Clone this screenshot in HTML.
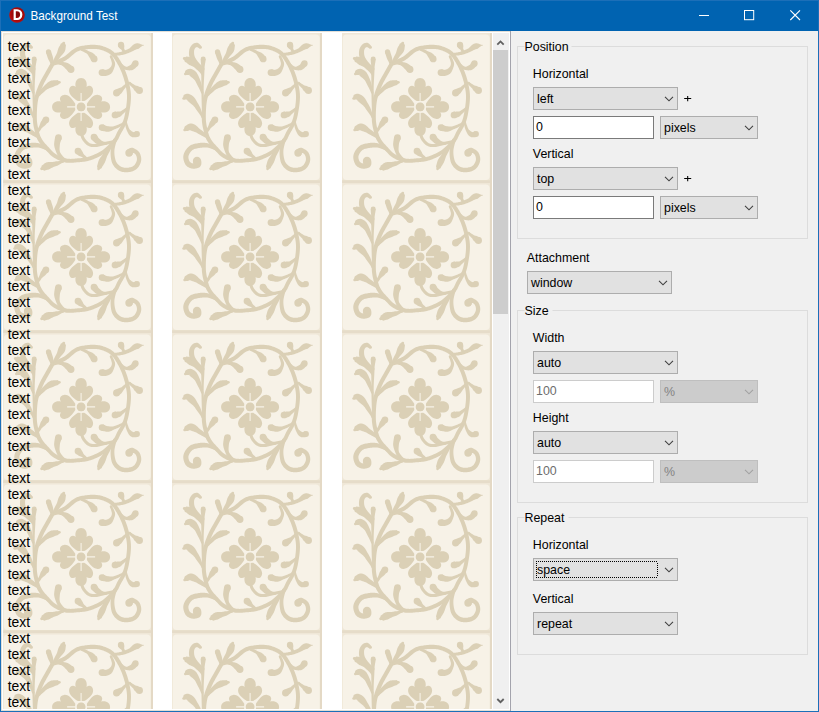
<!DOCTYPE html>
<html><head><meta charset="utf-8">
<style>
html,body{margin:0;padding:0}
body{width:819px;height:712px;overflow:hidden;background:#0063B1;position:relative;font-family:"Liberation Sans",sans-serif;}
svg{position:absolute;left:0;top:0}
</style></head><body>
<svg width="819" height="712" viewBox="0 0 819 712" font-family="Liberation Sans, sans-serif">
<!-- title bar -->
<rect x="0" y="0" width="819" height="712" fill="#1C6FB8"/>
<rect x="1" y="1" width="817" height="30" fill="#0063B1"/>
<defs><radialGradient id="ig" cx="0.55" cy="0.45" r="0.6"><stop offset="0" stop-color="#7A0808"/><stop offset="0.7" stop-color="#A80A0A"/><stop offset="1" stop-color="#C81212"/></radialGradient></defs>
<circle cx="17" cy="15" r="7.8" fill="url(#ig)"/>
<path fill="#fff" fill-rule="evenodd" d="M13.6 9.2H17.2A5.2 5.4 0 0 1 17.2 20H13.6Z M15.8 11.2H17A3.1 3.4 0 0 1 17 18H15.8Z"/>
<text x="30.4" y="19.8" fill="#fff" font-size="12.6" textLength="87" lengthAdjust="spacingAndGlyphs">Background Test</text>
<line x1="699" y1="15.5" x2="709" y2="15.5" stroke="#fff" stroke-width="1"/>
<rect x="744.5" y="10.5" width="9.2" height="9.2" fill="none" stroke="#fff" stroke-width="1"/>
<path d="M790.3 10.3 L800 20 M800 10.3 L790.3 20" stroke="#fff" stroke-width="1.1"/>
<!-- web view -->
<rect x="1" y="31" width="510" height="680" fill="#E2DED6"/>
<rect x="2" y="32" width="508" height="678" fill="#fff"/>
<rect x="510" y="31" width="1" height="680" fill="#A3A3AC"/>
<svg x="3" y="33" width="490" height="676" viewBox="3 33 490 676" overflow="hidden">
<defs><filter id="bl" x="-5%" y="-5%" width="110%" height="110%"><feGaussianBlur stdDeviation="0.35"/></filter><g id="tile" filter="url(#bl)"><rect x="0" y="0" width="150" height="150" fill="#EFE7D7"/><rect x="0" y="147.2" width="150" height="2.8" fill="#E6DCC9"/><rect x="148" y="0" width="2" height="150" fill="#E4D9C5"/><rect x="0.8" y="1.6" width="146.9" height="145.4" rx="4" fill="#F7F2E7"/><g fill="#DBD0B6"><path d="M50.31 32.90 L51.04 32.59 L52.00 32.20 L53.15 31.74 L54.45 31.21 L55.86 30.63 L57.33 30.00 L58.83 29.34 L60.30 28.64 L61.73 27.92 L63.06 27.17 L64.34 26.34 L65.56 25.44 L66.73 24.50 L67.85 23.53 L68.95 22.58 L70.01 21.66 L71.04 20.80 L72.03 20.03 L73.00 19.37 L73.95 18.82 L74.92 18.36 L75.92 17.96 L76.92 17.62 L77.93 17.33 L78.95 17.08 L79.98 16.87 L81.03 16.68 L82.09 16.52 L83.17 16.37 L84.25 16.23 L85.31 16.11 L86.38 16.02 L87.46 15.95 L88.55 15.91 L89.62 15.89 L90.69 15.91 L91.74 15.95 L92.77 16.01 L93.76 16.10 L94.71 16.22 L95.63 16.37 L96.54 16.55 L97.43 16.76 L98.30 16.99 L99.16 17.26 L100.00 17.54 L100.82 17.84 L101.62 18.16 L102.39 18.49 L103.13 18.84 L103.84 19.18 L104.49 19.52 L105.11 19.87 L105.70 20.22 L106.26 20.59 L106.80 20.98 L107.33 21.40 L107.86 21.86 L108.40 22.35 L108.94 22.90 L109.48 23.49 L110.02 24.12 L110.56 24.79 L111.09 25.51 L111.62 26.27 L112.15 27.06 L112.68 27.88 L113.21 28.73 L113.73 29.60 L114.25 30.50 L114.77 31.42 L115.29 32.37 L115.81 33.34 L116.32 34.35 L116.82 35.37 L117.32 36.41 L117.80 37.47 L118.26 38.54 L118.71 39.62 L119.13 40.71 L119.54 41.81 L119.94 42.95 L120.33 44.11 L120.70 45.28 L121.06 46.47 L121.40 47.66 L121.72 48.85 L122.02 50.05 L122.30 51.23 L122.56 52.41 L122.80 53.58 L123.03 54.74 L123.24 55.88 L123.43 57.01 L123.60 58.15 L123.75 59.28 L123.86 60.43 L123.95 61.59 L124.01 62.78 L124.03 64.00 L124.01 65.27 L123.95 66.60 L123.85 67.98 L123.72 69.39 L123.57 70.82 L123.39 72.24 L123.20 73.66 L122.99 75.04 L122.78 76.39 L122.57 77.67 L122.35 78.90 L122.14 80.08 L121.93 81.23 L121.70 82.33 L121.46 83.41 L121.20 84.46 L120.91 85.50 L120.60 86.53 L120.26 87.56 L119.88 88.59 L119.45 89.62 L118.97 90.67 L118.43 91.74 L117.85 92.82 L117.25 93.89 L116.64 94.97 L116.02 96.03 L115.41 97.07 L114.83 98.09 L114.28 99.08 L113.79 100.03 L113.37 100.91 L113.00 101.72 L112.67 102.47 L112.35 103.18 L112.01 103.85 L111.65 104.53 L111.22 105.22 L110.71 105.96 L110.08 106.79 L109.31 107.72 L108.46 108.73 L107.53 109.79 L106.54 110.87 L105.50 111.97 L104.42 113.05 L103.31 114.11 L102.17 115.11 L101.03 116.05 L99.88 116.91 L98.68 117.71 L97.40 118.49 L96.06 119.25 L94.67 119.98 L93.25 120.67 L91.83 121.32 L90.41 121.93 L89.02 122.49 L87.67 123.00 L86.38 123.45 L85.17 123.83 L84.00 124.14 L82.86 124.39 L81.73 124.60 L80.60 124.77 L79.48 124.91 L78.34 125.03 L77.19 125.14 L76.02 125.24 L74.82 125.35 L73.61 125.46 L72.40 125.58 L71.20 125.68 L70.02 125.77 L68.85 125.84 L67.70 125.88 L66.57 125.87 L65.47 125.82 L64.40 125.72 L63.36 125.56 L62.31 125.33 L61.23 125.04 L60.14 124.69 L59.05 124.29 L57.96 123.85 L56.89 123.37 L55.86 122.87 L54.86 122.36 L53.92 121.83 L53.04 121.31 L52.26 120.81 L51.57 120.30 L50.92 119.78 L50.31 119.23 L49.72 118.65 L49.12 118.04 L48.51 117.38 L47.87 116.68 L47.19 115.93 L46.46 115.14 L45.67 114.30 L44.84 113.43 L43.99 112.52 L43.13 111.59 L42.28 110.64 L41.45 109.69 L40.67 108.73 L39.94 107.79 L39.29 106.87 L38.73 105.97 L38.24 105.09 L37.81 104.22 L37.42 103.34 L37.08 102.44 L36.77 101.54 L36.49 100.60 L36.22 99.64 L35.97 98.65 L35.72 97.61 L35.47 96.54 L35.21 95.45 L34.97 94.39 L34.75 93.33 L34.54 92.27 L34.36 91.18 L34.19 90.06 L34.06 88.90 L33.95 87.67 L33.87 86.36 L33.83 84.96 L33.82 83.43 L33.83 81.76 L33.86 80.00 L33.93 78.17 L34.02 76.30 L34.14 74.43 L34.30 72.56 L34.50 70.75 L34.74 69.01 L35.01 67.38 L35.34 65.82 L35.71 64.29 L36.13 62.79 L36.58 61.32 L37.08 59.87 L37.60 58.43 L38.15 57.01 L38.72 55.60 L39.30 54.20 L39.89 52.82 L40.50 51.47 L41.15 50.11 L41.85 48.76 L42.58 47.41 L43.33 46.08 L44.07 44.77 L44.81 43.50 L45.52 42.28 L46.19 41.10 L46.81 40.00 L47.38 38.96 L47.94 37.96 L48.48 36.99 L48.99 36.07 L49.48 35.21 L49.94 34.40 L50.35 33.68 L50.72 33.03 L51.04 32.47 L51.30 32.02 L47.70 29.98 L47.45 30.43 L47.13 30.99 L46.77 31.63 L46.35 32.36 L45.89 33.17 L45.40 34.04 L44.87 34.97 L44.33 35.95 L43.76 36.96 L43.19 38.00 L42.60 39.07 L41.94 40.22 L41.23 41.44 L40.50 42.72 L39.74 44.05 L38.97 45.42 L38.21 46.83 L37.47 48.27 L36.76 49.72 L36.11 51.18 L35.50 52.61 L34.91 54.04 L34.32 55.50 L33.75 56.99 L33.20 58.51 L32.68 60.06 L32.19 61.64 L31.74 63.26 L31.34 64.92 L30.99 66.62 L30.69 68.40 L30.44 70.26 L30.23 72.17 L30.07 74.12 L29.94 76.07 L29.85 78.00 L29.79 79.89 L29.76 81.71 L29.75 83.43 L29.77 85.04 L29.82 86.54 L29.90 87.97 L30.02 89.31 L30.18 90.59 L30.36 91.82 L30.56 93.00 L30.78 94.14 L31.02 95.26 L31.27 96.36 L31.53 97.46 L31.79 98.55 L32.06 99.62 L32.33 100.68 L32.62 101.73 L32.94 102.78 L33.30 103.82 L33.70 104.86 L34.16 105.91 L34.68 106.96 L35.27 108.03 L35.96 109.10 L36.72 110.17 L37.53 111.23 L38.39 112.27 L39.28 113.29 L40.18 114.29 L41.07 115.25 L41.94 116.17 L42.77 117.04 L43.54 117.86 L44.25 118.63 L44.93 119.37 L45.58 120.08 L46.24 120.78 L46.91 121.47 L47.61 122.15 L48.35 122.81 L49.15 123.45 L50.02 124.08 L50.96 124.69 L51.95 125.27 L52.99 125.85 L54.09 126.42 L55.23 126.97 L56.41 127.49 L57.63 127.98 L58.86 128.43 L60.11 128.83 L61.37 129.17 L62.64 129.44 L63.92 129.63 L65.20 129.75 L66.48 129.81 L67.76 129.81 L69.03 129.77 L70.29 129.70 L71.53 129.60 L72.77 129.49 L73.98 129.37 L75.18 129.25 L76.36 129.15 L77.54 129.04 L78.73 128.93 L79.93 128.81 L81.15 128.65 L82.38 128.46 L83.65 128.23 L84.94 127.93 L86.27 127.58 L87.62 127.15 L89.00 126.67 L90.44 126.13 L91.91 125.53 L93.41 124.89 L94.92 124.19 L96.43 123.46 L97.92 122.68 L99.37 121.85 L100.78 120.99 L102.12 120.09 L103.42 119.12 L104.70 118.08 L105.94 116.98 L107.14 115.84 L108.30 114.68 L109.40 113.52 L110.44 112.38 L111.41 111.27 L112.30 110.21 L113.12 109.21 L113.86 108.26 L114.49 107.35 L115.02 106.48 L115.47 105.65 L115.87 104.85 L116.22 104.08 L116.56 103.32 L116.90 102.56 L117.28 101.77 L117.72 100.92 L118.23 100.00 L118.79 99.02 L119.39 97.99 L120.01 96.92 L120.65 95.82 L121.28 94.69 L121.89 93.54 L122.48 92.37 L123.03 91.19 L123.52 90.01 L123.95 88.86 L124.33 87.72 L124.67 86.58 L124.98 85.45 L125.27 84.31 L125.53 83.16 L125.77 81.99 L126.00 80.80 L126.22 79.58 L126.43 78.33 L126.65 77.01 L126.87 75.64 L127.08 74.21 L127.29 72.75 L127.47 71.27 L127.64 69.78 L127.77 68.30 L127.88 66.83 L127.95 65.39 L127.97 64.00 L127.95 62.66 L127.90 61.35 L127.80 60.08 L127.68 58.83 L127.52 57.60 L127.34 56.39 L127.14 55.19 L126.92 54.00 L126.69 52.80 L126.44 51.59 L126.18 50.36 L125.88 49.11 L125.57 47.85 L125.23 46.60 L124.88 45.35 L124.51 44.10 L124.12 42.87 L123.72 41.66 L123.30 40.46 L122.87 39.29 L122.42 38.14 L121.95 36.99 L121.46 35.85 L120.96 34.73 L120.44 33.63 L119.91 32.55 L119.37 31.50 L118.83 30.47 L118.29 29.47 L117.75 28.50 L117.20 27.56 L116.65 26.64 L116.10 25.73 L115.53 24.85 L114.95 23.98 L114.36 23.14 L113.76 22.33 L113.14 21.55 L112.51 20.81 L111.86 20.10 L111.21 19.45 L110.56 18.84 L109.91 18.28 L109.24 17.75 L108.57 17.26 L107.87 16.80 L107.16 16.36 L106.42 15.95 L105.66 15.55 L104.87 15.16 L104.04 14.78 L103.18 14.41 L102.29 14.05 L101.36 13.71 L100.41 13.38 L99.44 13.08 L98.43 12.81 L97.40 12.56 L96.35 12.35 L95.29 12.18 L94.20 12.04 L93.09 11.94 L91.95 11.87 L90.80 11.82 L89.62 11.81 L88.45 11.82 L87.26 11.86 L86.08 11.93 L84.90 12.04 L83.75 12.17 L82.63 12.31 L81.51 12.46 L80.37 12.63 L79.22 12.83 L78.05 13.07 L76.87 13.36 L75.68 13.70 L74.48 14.11 L73.28 14.60 L72.05 15.18 L70.81 15.88 L69.61 16.70 L68.46 17.59 L67.34 18.52 L66.24 19.47 L65.16 20.41 L64.09 21.32 L63.03 22.18 L61.99 22.95 L60.94 23.63 L59.78 24.28 L58.49 24.93 L57.11 25.59 L55.68 26.22 L54.27 26.82 L52.89 27.39 L51.61 27.90 L50.45 28.37 L49.46 28.77 L48.69 29.10Z"/><path d="M110.57 22.97 L111.00 22.92 L111.55 22.87 L112.22 22.82 L112.99 22.76 L113.82 22.70 L114.71 22.62 L115.62 22.53 L116.56 22.42 L117.49 22.29 L118.39 22.12 L119.27 21.93 L120.18 21.71 L121.10 21.47 L122.04 21.21 L122.98 20.92 L123.91 20.61 L124.83 20.28 L125.72 19.94 L126.58 19.58 L127.43 19.22 L128.28 18.84 L129.10 18.45 L129.88 18.05 L130.61 17.68 L131.30 17.32 L131.94 17.01 L132.54 16.74 L133.08 16.52 L133.57 16.35 L134.04 16.22 L134.57 16.08 L135.21 15.90 L135.90 15.53 L136.63 14.99 L137.38 14.35 L138.13 13.72 L138.85 13.21 L139.52 12.85 L140.10 12.65 L140.55 12.55 L140.45 11.85 L140.00 11.88 L139.40 11.82 L138.68 11.61 L137.84 11.27 L136.92 10.85 L135.93 10.46 L134.91 10.21 L133.89 10.19 L132.91 10.43 L131.96 10.78 L131.08 11.24 L130.29 11.77 L129.60 12.33 L128.99 12.90 L128.44 13.46 L127.92 14.01 L127.42 14.52 L126.91 15.00 L126.37 15.41 L125.77 15.78 L125.07 16.12 L124.29 16.45 L123.47 16.79 L122.63 17.12 L121.77 17.45 L120.91 17.78 L120.05 18.08 L119.21 18.37 L118.39 18.64 L117.61 18.88 L116.84 19.08 L116.03 19.27 L115.19 19.43 L114.34 19.56 L113.50 19.68 L112.70 19.78 L111.96 19.86 L111.28 19.92 L110.70 19.98 L110.23 20.03Z"/><circle cx="110.40" cy="21.50" r="1.47"/><circle cx="140.50" cy="12.20" r="0.35"/><path d="M122.49 19.00 L122.37 18.76 L122.23 18.43 L122.09 18.04 L121.95 17.59 L121.80 17.11 L121.63 16.62 L121.44 16.13 L121.24 15.67 L121.16 15.19 L121.18 14.72 L121.25 14.24 L121.32 13.75 L121.35 13.27 L121.30 12.83 L121.16 12.44 L121.09 12.03 L121.07 11.64 L121.04 11.29 L120.98 11.00 L120.90 10.78 L115.10 13.22 L115.20 13.42 L115.36 13.65 L115.58 13.91 L115.85 14.22 L116.09 14.56 L116.29 14.96 L116.58 15.33 L116.96 15.67 L117.40 15.98 L117.82 16.28 L118.22 16.60 L118.56 16.99 L118.81 17.44 L119.09 17.90 L119.39 18.33 L119.69 18.74 L119.97 19.12 L120.21 19.46 L120.39 19.76 L120.51 20.00Z"/><circle cx="121.50" cy="19.50" r="1.11"/><circle cx="118.00" cy="12.00" r="3.15"/><path d="M115.19 30.31 L115.52 30.65 L115.95 31.13 L116.45 31.74 L117.03 32.45 L117.65 33.20 L118.31 33.97 L119.01 34.71 L119.76 35.39 L120.56 35.97 L121.41 36.41 L122.25 36.71 L123.08 36.94 L123.92 37.12 L124.76 37.25 L125.61 37.34 L126.45 37.38 L127.28 37.36 L128.08 37.29 L128.84 37.15 L129.62 36.92 L130.46 36.53 L131.23 36.00 L131.91 35.43 L132.54 34.88 L133.12 34.35 L133.64 33.86 L134.09 33.41 L134.45 33.03 L134.68 32.78 L134.85 32.60 L130.15 28.40 L129.87 28.73 L129.55 29.17 L129.26 29.63 L128.98 30.10 L128.70 30.58 L128.41 31.04 L128.11 31.43 L127.81 31.72 L127.58 31.92 L127.38 32.08 L127.06 32.29 L126.63 32.55 L126.16 32.83 L125.66 33.10 L125.14 33.35 L124.61 33.55 L124.07 33.68 L123.54 33.74 L123.03 33.71 L122.59 33.59 L122.14 33.36 L121.58 33.00 L120.93 32.53 L120.24 31.97 L119.54 31.36 L118.86 30.74 L118.23 30.13 L117.67 29.55 L117.19 29.06 L116.81 28.69Z"/><circle cx="116.00" cy="29.50" r="1.15"/><circle cx="132.50" cy="30.50" r="3.15"/><path d="M106.84 23.95 L107.03 24.42 L107.28 25.04 L107.57 25.75 L107.88 26.53 L108.17 27.36 L108.44 28.20 L108.66 29.03 L108.81 29.79 L108.89 30.45 L108.88 30.96 L108.81 31.46 L108.68 32.01 L108.49 32.61 L108.21 33.20 L107.84 33.77 L107.42 34.30 L106.96 34.79 L106.49 35.22 L106.04 35.60 L105.64 35.87 L105.33 36.04 L105.05 36.15 L104.76 36.24 L104.46 36.34 L104.15 36.43 L103.81 36.53 L103.46 36.64 L103.09 36.75 L102.69 36.83 L102.36 36.88 L102.17 36.87 L101.98 36.83 L101.73 36.77 L101.43 36.69 L101.10 36.60 L100.76 36.51 L100.41 36.43 L100.05 36.35 L99.65 36.29 L99.33 36.25 L98.67 42.95 L98.82 42.96 L99.02 42.98 L99.37 43.02 L99.82 43.06 L100.33 43.08 L100.92 43.09 L101.55 43.07 L102.23 43.00 L102.95 42.89 L103.64 42.72 L104.18 42.55 L104.70 42.39 L105.26 42.21 L105.86 41.99 L106.48 41.71 L107.11 41.35 L107.73 40.91 L108.32 40.39 L108.88 39.79 L109.36 39.13 L109.73 38.45 L110.08 37.75 L110.41 36.99 L110.72 36.20 L111.03 35.38 L111.33 34.55 L111.62 33.71 L111.87 32.85 L112.05 31.96 L112.12 31.04 L112.04 30.07 L111.81 29.10 L111.50 28.15 L111.11 27.22 L110.70 26.33 L110.29 25.49 L109.90 24.71 L109.57 24.03 L109.32 23.48 L109.16 23.05Z"/><circle cx="108.00" cy="23.50" r="1.24"/><circle cx="99.00" cy="39.60" r="3.37"/><path d="M78.04 17.56 L78.38 17.71 L78.82 17.90 L79.32 18.14 L79.88 18.41 L80.46 18.72 L81.06 19.05 L81.65 19.38 L82.22 19.72 L82.75 20.03 L83.22 20.32 L83.67 20.60 L84.10 20.95 L84.49 21.35 L84.85 21.80 L85.16 22.29 L85.45 22.78 L85.72 23.27 L85.99 23.74 L86.25 24.17 L86.49 24.53 L86.71 24.84 L86.96 25.15 L87.20 25.50 L87.41 25.89 L87.59 26.29 L87.76 26.69 L87.93 27.07 L88.11 27.42 L88.31 27.74 L88.49 27.99 L93.91 24.01 L93.79 23.85 L93.61 23.63 L93.36 23.35 L93.04 23.01 L92.68 22.65 L92.27 22.25 L91.86 21.82 L91.43 21.36 L91.00 20.89 L90.51 20.47 L90.01 20.13 L89.48 19.83 L88.90 19.57 L88.30 19.32 L87.69 19.09 L87.07 18.85 L86.47 18.60 L85.88 18.33 L85.33 18.02 L84.78 17.68 L84.18 17.37 L83.53 17.08 L82.85 16.81 L82.16 16.57 L81.48 16.34 L80.83 16.13 L80.23 15.93 L79.71 15.75 L79.28 15.58 L78.96 15.44Z"/><circle cx="78.50" cy="16.50" r="1.15"/><circle cx="91.20" cy="26.00" r="3.37"/><path d="M123.12 50.13 L122.78 50.47 L122.32 50.90 L121.77 51.38 L121.14 51.91 L120.47 52.47 L119.78 53.05 L119.13 53.65 L118.48 54.21 L117.77 54.60 L117.09 54.85 L116.43 55.03 L115.76 55.20 L115.11 55.43 L114.52 55.72 L113.97 56.05 L113.39 56.30 L112.83 56.50 L112.33 56.70 L111.89 56.91 L111.56 57.12 L115.44 62.88 L115.70 62.69 L116.02 62.41 L116.40 62.04 L116.84 61.59 L117.34 61.13 L117.93 60.70 L118.50 60.19 L119.02 59.56 L119.48 58.87 L119.91 58.15 L120.34 57.41 L120.84 56.67 L121.45 56.00 L122.07 55.31 L122.66 54.60 L123.20 53.89 L123.71 53.23 L124.17 52.66 L124.57 52.20 L124.88 51.87Z"/><circle cx="124.00" cy="51.00" r="1.24"/><circle cx="113.50" cy="60.00" r="3.47"/><path d="M125.71 50.95 L126.03 51.23 L126.44 51.62 L126.92 52.09 L127.43 52.65 L127.99 53.24 L128.58 53.84 L129.21 54.40 L129.80 54.97 L130.28 55.62 L130.67 56.27 L131.06 56.90 L131.47 57.51 L131.92 58.04 L132.43 58.47 L132.94 58.85 L133.37 59.26 L133.74 59.65 L134.08 59.99 L134.36 60.24 L134.60 60.41 L138.40 54.59 L138.11 54.42 L137.73 54.24 L137.28 54.08 L136.78 53.92 L136.25 53.72 L135.75 53.43 L135.21 53.17 L134.61 52.98 L133.97 52.85 L133.33 52.73 L132.65 52.56 L131.95 52.28 L131.29 51.84 L130.64 51.35 L129.95 50.88 L129.27 50.45 L128.64 50.04 L128.08 49.66 L127.63 49.32 L127.29 49.05Z"/><circle cx="126.50" cy="50.00" r="1.24"/><circle cx="136.50" cy="57.50" r="3.47"/><path d="M123.23 74.53 L122.82 74.85 L122.28 75.25 L121.63 75.71 L120.89 76.19 L120.11 76.70 L119.33 77.23 L118.59 77.78 L117.82 78.20 L117.06 78.42 L116.41 78.49 L115.87 78.47 L115.33 78.46 L114.79 78.49 L114.27 78.58 L113.74 78.65 L113.20 78.64 L112.67 78.61 L112.16 78.60 L111.66 78.64 L111.25 78.72 L112.75 85.28 L112.99 85.21 L113.30 85.11 L113.76 84.94 L114.32 84.71 L114.95 84.48 L115.66 84.27 L116.41 84.02 L117.17 83.64 L117.90 83.12 L118.59 82.51 L119.22 81.82 L119.86 81.09 L120.58 80.42 L121.35 79.79 L122.07 79.11 L122.75 78.42 L123.36 77.78 L123.92 77.22 L124.40 76.78 L124.77 76.47Z"/><circle cx="124.00" cy="75.50" r="1.24"/><circle cx="112.00" cy="82.00" r="3.37"/><path d="M120.00 89.47 L119.48 89.71 L118.79 90.04 L117.99 90.41 L117.08 90.81 L116.10 91.22 L115.10 91.63 L114.09 92.03 L113.13 92.42 L112.25 92.77 L111.47 93.06 L110.73 93.26 L109.99 93.41 L109.26 93.49 L108.55 93.52 L107.88 93.52 L107.23 93.48 L106.63 93.43 L106.05 93.36 L105.51 93.29 L105.04 93.23 L104.60 93.16 L104.12 93.08 L103.58 92.93 L103.02 92.72 L102.45 92.46 L101.90 92.19 L101.36 91.93 L100.84 91.70 L100.33 91.50 L99.91 91.37 L98.09 97.63 L98.38 97.70 L98.76 97.81 L99.30 97.94 L99.94 98.09 L100.67 98.23 L101.46 98.37 L102.29 98.51 L103.16 98.66 L104.06 98.77 L104.96 98.77 L105.79 98.67 L106.57 98.50 L107.33 98.27 L108.08 97.99 L108.81 97.67 L109.53 97.32 L110.26 96.97 L110.99 96.61 L111.74 96.27 L112.53 95.94 L113.40 95.60 L114.35 95.17 L115.32 94.68 L116.30 94.14 L117.27 93.59 L118.20 93.05 L119.07 92.56 L119.85 92.13 L120.50 91.78 L121.00 91.53Z"/><circle cx="120.50" cy="90.50" r="1.15"/><circle cx="99.00" cy="94.50" r="3.26"/><path d="M121.47 88.27 L121.61 88.78 L121.76 89.46 L121.92 90.29 L122.09 91.23 L122.27 92.25 L122.48 93.29 L122.72 94.34 L123.01 95.35 L123.35 96.30 L123.71 97.15 L124.06 97.94 L124.40 98.72 L124.76 99.49 L125.14 100.25 L125.55 100.99 L126.01 101.68 L126.51 102.31 L127.07 102.88 L127.69 103.37 L128.43 103.81 L129.35 104.15 L130.30 104.32 L131.17 104.36 L131.97 104.33 L132.68 104.25 L133.31 104.15 L133.85 104.03 L134.25 103.94 L134.46 103.89 L134.58 103.87 L133.42 98.13 L133.01 98.22 L132.53 98.37 L132.12 98.54 L131.73 98.71 L131.38 98.88 L131.07 99.02 L130.81 99.11 L130.64 99.17 L130.59 99.19 L130.57 99.19 L130.40 99.11 L130.06 98.94 L129.66 98.72 L129.20 98.45 L128.70 98.14 L128.18 97.78 L127.65 97.37 L127.14 96.91 L126.68 96.40 L126.29 95.85 L125.97 95.21 L125.66 94.43 L125.33 93.54 L125.00 92.59 L124.67 91.63 L124.36 90.68 L124.09 89.78 L123.86 88.96 L123.67 88.26 L123.53 87.73Z"/><circle cx="122.50" cy="88.00" r="1.06"/><circle cx="134.00" cy="101.00" r="2.93"/><path d="M110.28 106.56 L110.12 107.19 L109.89 108.01 L109.60 109.00 L109.27 110.13 L108.93 111.35 L108.58 112.64 L108.26 113.97 L107.98 115.31 L107.76 116.63 L107.63 117.89 L107.58 119.10 L107.57 120.32 L107.60 121.56 L107.67 122.81 L107.78 124.05 L107.94 125.27 L108.15 126.47 L108.40 127.62 L108.70 128.73 L109.06 129.78 L109.49 130.78 L109.99 131.72 L110.54 132.60 L111.14 133.42 L111.78 134.19 L112.45 134.90 L113.15 135.55 L113.87 136.15 L114.60 136.70 L115.35 137.19 L116.15 137.65 L116.99 138.05 L117.85 138.39 L118.73 138.67 L119.62 138.89 L120.52 139.06 L121.42 139.17 L122.33 139.24 L123.22 139.26 L124.11 139.24 L125.02 139.17 L125.95 139.06 L126.90 138.90 L127.87 138.69 L128.84 138.43 L129.80 138.13 L130.74 137.76 L131.66 137.33 L132.54 136.82 L133.37 136.23 L134.12 135.56 L134.81 134.82 L135.43 134.03 L135.99 133.20 L136.50 132.34 L136.95 131.46 L137.34 130.56 L137.67 129.66 L137.93 128.77 L138.13 127.87 L138.24 126.94 L138.26 126.00 L138.20 125.07 L138.08 124.16 L137.90 123.27 L137.66 122.40 L137.38 121.57 L137.06 120.78 L136.69 120.03 L136.27 119.32 L135.76 118.64 L135.17 118.02 L134.53 117.47 L133.86 116.98 L133.17 116.56 L132.49 116.16 L131.82 115.77 L131.14 115.41 L130.43 115.09 L129.56 114.85 L128.47 114.82 L127.43 115.02 L126.55 115.34 L125.79 115.70 L125.14 116.08 L124.59 116.45 L124.15 116.79 L123.83 117.06 L123.69 117.17 L123.61 117.23 L128.39 122.77 L128.71 122.48 L129.07 122.09 L129.34 121.73 L129.56 121.38 L129.74 121.05 L129.86 120.75 L129.91 120.51 L129.87 120.36 L129.67 120.26 L129.44 120.15 L129.48 120.02 L129.78 119.96 L130.18 119.97 L130.63 120.06 L131.08 120.25 L131.50 120.51 L131.89 120.80 L132.23 121.10 L132.51 121.39 L132.73 121.68 L132.94 122.04 L133.17 122.51 L133.38 123.04 L133.57 123.62 L133.73 124.23 L133.85 124.86 L133.93 125.48 L133.96 126.07 L133.94 126.62 L133.87 127.13 L133.75 127.67 L133.56 128.28 L133.32 128.92 L133.02 129.58 L132.69 130.22 L132.31 130.85 L131.90 131.43 L131.48 131.95 L131.05 132.40 L130.63 132.77 L130.18 133.08 L129.63 133.38 L129.01 133.67 L128.33 133.93 L127.60 134.15 L126.85 134.35 L126.08 134.50 L125.32 134.63 L124.58 134.71 L123.89 134.76 L123.22 134.78 L122.55 134.76 L121.88 134.71 L121.21 134.63 L120.56 134.51 L119.93 134.36 L119.32 134.17 L118.74 133.95 L118.18 133.70 L117.65 133.41 L117.10 133.06 L116.55 132.67 L116.01 132.24 L115.48 131.77 L114.97 131.27 L114.50 130.73 L114.05 130.16 L113.64 129.55 L113.27 128.90 L112.94 128.22 L112.64 127.45 L112.36 126.58 L112.11 125.62 L111.90 124.60 L111.72 123.54 L111.57 122.44 L111.46 121.33 L111.39 120.23 L111.36 119.14 L111.37 118.11 L111.44 117.07 L111.59 115.94 L111.81 114.74 L112.08 113.50 L112.39 112.27 L112.70 111.09 L113.01 109.98 L113.30 108.98 L113.54 108.12 L113.72 107.44Z"/><circle cx="112.00" cy="107.00" r="1.77"/><circle cx="126.00" cy="120.00" r="3.66"/><path d="M109.02 109.34 L108.66 109.87 L108.17 110.54 L107.56 111.32 L106.85 112.18 L106.07 113.09 L105.24 114.04 L104.41 115.02 L103.60 116.00 L102.86 116.96 L102.21 117.90 L101.63 118.81 L101.06 119.73 L100.44 120.61 L99.79 121.48 L99.12 122.33 L98.45 123.17 L97.80 124.01 L97.20 124.86 L96.64 125.71 L96.15 126.59 L95.71 127.52 L95.35 128.52 L95.06 129.55 L94.81 130.57 L94.54 131.55 L94.24 132.45 L94.02 133.30 L94.26 134.23 L94.47 135.01 L94.40 135.53 L96.60 136.47 L96.94 136.05 L97.64 135.63 L98.47 135.14 L98.91 134.40 L99.33 133.58 L99.84 132.74 L100.40 131.90 L100.94 131.07 L101.44 130.24 L101.85 129.41 L102.23 128.57 L102.58 127.67 L102.91 126.74 L103.24 125.78 L103.57 124.80 L103.93 123.82 L104.32 122.85 L104.77 121.91 L105.27 121.00 L105.79 120.10 L106.31 119.15 L106.86 118.12 L107.42 117.02 L107.99 115.89 L108.56 114.78 L109.12 113.73 L109.66 112.76 L110.17 111.91 L110.62 111.20 L110.98 110.66Z"/><circle cx="110.00" cy="110.00" r="1.18"/><circle cx="95.50" cy="136.00" r="1.19"/><path d="M84.78 125.04 L84.45 124.76 L84.02 124.37 L83.53 123.89 L83.01 123.35 L82.44 122.76 L81.85 122.18 L81.23 121.64 L80.69 121.05 L80.30 120.40 L80.02 119.79 L79.78 119.23 L79.53 118.69 L79.23 118.21 L78.87 117.80 L78.55 117.39 L78.29 116.96 L78.06 116.55 L77.84 116.18 L77.61 115.88 L77.41 115.65 L72.59 120.35 L72.79 120.53 L73.05 120.74 L73.40 120.98 L73.81 121.24 L74.26 121.54 L74.70 121.92 L75.16 122.32 L75.71 122.67 L76.32 122.96 L76.98 123.21 L77.69 123.46 L78.43 123.76 L79.13 124.20 L79.79 124.71 L80.49 125.18 L81.19 125.61 L81.85 126.00 L82.42 126.37 L82.88 126.70 L83.22 126.96Z"/><circle cx="84.00" cy="126.00" r="1.24"/><circle cx="75.00" cy="118.00" r="3.37"/><path d="M63.90 127.03 L63.45 126.60 L62.84 126.06 L62.15 125.43 L61.40 124.72 L60.62 123.95 L59.86 123.15 L59.13 122.33 L58.48 121.53 L57.94 120.79 L57.53 120.12 L57.19 119.44 L56.91 118.68 L56.72 117.86 L56.61 117.00 L56.57 116.13 L56.59 115.24 L56.64 114.37 L56.71 113.52 L56.78 112.70 L56.84 111.97 L56.91 111.32 L57.00 110.66 L57.14 109.93 L57.36 109.19 L57.63 108.46 L57.93 107.74 L58.20 107.06 L58.45 106.41 L58.65 105.79 L58.77 105.28 L52.23 103.72 L52.14 104.09 L52.03 104.58 L51.90 105.25 L51.75 106.03 L51.62 106.92 L51.48 107.87 L51.34 108.87 L51.20 109.91 L51.12 110.99 L51.16 112.03 L51.29 113.00 L51.48 113.95 L51.73 114.93 L52.03 115.93 L52.37 116.94 L52.74 117.94 L53.13 118.94 L53.54 119.93 L53.97 120.91 L54.47 121.88 L55.12 122.84 L55.91 123.75 L56.78 124.60 L57.70 125.41 L58.63 126.17 L59.53 126.88 L60.37 127.53 L61.09 128.10 L61.68 128.59 L62.10 128.97Z"/><circle cx="63.00" cy="128.00" r="1.33"/><circle cx="55.50" cy="104.50" r="3.37"/><path d="M59.64 127.37 L59.16 127.52 L58.52 127.68 L57.75 127.83 L56.88 127.97 L55.94 128.07 L54.95 128.16 L53.97 128.25 L53.01 128.36 L52.12 128.50 L51.34 128.66 L50.64 128.83 L49.94 128.96 L49.23 129.03 L48.50 129.05 L47.76 129.03 L47.00 129.02 L46.22 129.02 L45.41 129.06 L44.60 129.17 L43.76 129.36 L42.93 129.65 L42.13 130.05 L41.39 130.56 L40.68 131.13 L40.01 131.67 L39.35 132.13 L38.73 132.53 L38.46 133.39 L38.28 134.21 L38.00 134.56 L39.20 137.04 L39.68 137.03 L40.46 137.35 L41.33 137.63 L41.99 137.38 L42.72 137.15 L43.50 136.99 L44.28 136.85 L45.03 136.69 L45.68 136.48 L46.24 136.24 L46.75 135.98 L47.28 135.68 L47.83 135.37 L48.42 135.04 L49.04 134.70 L49.70 134.38 L50.39 134.08 L51.11 133.81 L51.88 133.58 L52.66 133.34 L53.47 133.04 L54.32 132.65 L55.19 132.19 L56.07 131.70 L56.94 131.20 L57.77 130.74 L58.56 130.34 L59.27 130.02 L59.88 129.79 L60.36 129.63Z"/><circle cx="60.00" cy="128.50" r="1.18"/><circle cx="38.60" cy="135.80" r="1.38"/><path d="M111.28 106.80 L110.62 106.97 L109.74 107.20 L108.70 107.46 L107.54 107.73 L106.32 107.98 L105.07 108.23 L103.86 108.46 L102.74 108.66 L101.76 108.78 L100.98 108.75 L100.35 108.60 L99.77 108.36 L99.26 108.07 L98.79 107.74 L98.35 107.38 L97.92 107.01 L97.50 106.64 L97.05 106.27 L96.59 105.90 L96.16 105.60 L95.86 105.36 L95.61 105.09 L95.36 104.74 L95.11 104.34 L94.87 103.91 L94.64 103.47 L94.40 103.04 L94.15 102.63 L93.88 102.22 L93.63 101.90 L88.37 106.10 L88.51 106.27 L88.70 106.51 L88.99 106.86 L89.37 107.29 L89.81 107.78 L90.32 108.29 L90.88 108.82 L91.50 109.37 L92.17 109.92 L92.84 110.40 L93.43 110.77 L94.03 111.08 L94.70 111.40 L95.45 111.68 L96.26 111.93 L97.13 112.13 L98.05 112.26 L99.00 112.33 L99.99 112.32 L101.02 112.25 L102.12 112.10 L103.32 111.90 L104.56 111.62 L105.84 111.25 L107.10 110.83 L108.31 110.39 L109.44 109.98 L110.45 109.64 L111.28 109.37 L111.92 109.20Z"/><circle cx="111.60" cy="108.00" r="1.24"/><circle cx="91.00" cy="104.00" r="3.37"/><path d="M76.54 99.47 L76.67 99.86 L76.81 100.39 L76.99 101.04 L77.20 101.79 L77.44 102.60 L77.71 103.46 L78.01 104.33 L78.36 105.19 L78.75 106.03 L79.20 106.81 L79.66 107.51 L80.16 108.19 L80.70 108.87 L81.27 109.54 L81.87 110.19 L82.50 110.82 L83.16 111.40 L83.84 111.94 L84.55 112.43 L85.29 112.86 L86.05 113.21 L86.81 113.50 L87.59 113.72 L88.38 113.88 L89.17 113.99 L89.96 114.06 L90.75 114.10 L91.53 114.10 L92.32 114.07 L93.13 114.03 L94.01 113.93 L94.96 113.76 L95.93 113.55 L96.91 113.30 L97.86 113.04 L98.77 112.77 L99.61 112.51 L100.34 112.29 L100.95 112.11 L101.41 111.98 L100.59 109.02 L100.09 109.16 L99.45 109.35 L98.71 109.58 L97.89 109.83 L97.02 110.09 L96.12 110.34 L95.22 110.57 L94.36 110.76 L93.58 110.89 L92.87 110.97 L92.19 111.01 L91.49 111.03 L90.81 111.03 L90.16 111.00 L89.52 110.94 L88.91 110.86 L88.32 110.74 L87.76 110.58 L87.22 110.38 L86.71 110.14 L86.20 109.84 L85.67 109.48 L85.13 109.05 L84.60 108.58 L84.07 108.06 L83.56 107.51 L83.07 106.93 L82.61 106.34 L82.18 105.75 L81.80 105.19 L81.48 104.62 L81.18 103.97 L80.89 103.25 L80.62 102.49 L80.37 101.71 L80.15 100.95 L79.95 100.22 L79.77 99.56 L79.60 98.98 L79.46 98.53Z"/><circle cx="78.00" cy="99.00" r="1.53"/><circle cx="101.00" cy="110.50" r="1.53"/><path d="M34.50 101.57 L34.71 101.21 L34.99 100.75 L35.34 100.20 L35.73 99.60 L36.17 98.97 L36.63 98.31 L37.09 97.65 L37.53 97.00 L37.94 96.39 L38.30 95.82 L38.67 95.32 L39.11 94.84 L39.59 94.41 L40.10 94.00 L40.61 93.60 L41.12 93.22 L41.60 92.84 L42.04 92.46 L42.44 92.07 L42.77 91.68 L43.07 91.29 L43.38 90.94 L43.72 90.60 L44.05 90.30 L44.38 90.01 L44.69 89.74 L44.96 89.48 L45.20 89.23 L45.40 89.01 L45.55 88.82 L40.45 84.78 L40.31 84.95 L40.15 85.18 L39.97 85.46 L39.77 85.79 L39.55 86.17 L39.33 86.58 L39.09 87.01 L38.82 87.45 L38.53 87.89 L38.23 88.32 L37.95 88.78 L37.69 89.28 L37.45 89.83 L37.22 90.42 L37.01 91.05 L36.80 91.69 L36.57 92.33 L36.32 92.97 L36.04 93.59 L35.70 94.18 L35.33 94.79 L34.96 95.46 L34.59 96.18 L34.23 96.92 L33.89 97.66 L33.56 98.37 L33.25 99.02 L32.96 99.59 L32.71 100.07 L32.50 100.43Z"/><circle cx="33.50" cy="101.00" r="1.15"/><circle cx="43.00" cy="86.80" r="3.26"/><path d="M45.64 115.11 L45.12 114.86 L44.44 114.52 L43.63 114.09 L42.71 113.59 L41.71 113.05 L40.68 112.49 L39.62 111.93 L38.56 111.41 L37.52 110.95 L36.51 110.58 L35.58 110.30 L34.68 110.08 L33.79 109.92 L32.90 109.80 L32.03 109.72 L31.16 109.69 L30.29 109.70 L29.42 109.75 L28.54 109.83 L27.66 109.94 L26.76 110.07 L25.81 110.21 L24.81 110.38 L23.78 110.57 L22.72 110.81 L21.66 111.09 L20.59 111.43 L19.54 111.84 L18.52 112.35 L17.55 112.96 L16.66 113.66 L15.84 114.43 L15.08 115.26 L14.38 116.14 L13.73 117.06 L13.14 118.01 L12.62 118.97 L12.17 119.95 L11.80 120.93 L11.51 121.94 L11.33 122.99 L11.27 124.06 L11.31 125.10 L11.43 126.12 L11.62 127.11 L11.87 128.06 L12.17 128.97 L12.51 129.82 L12.88 130.62 L13.32 131.39 L13.85 132.13 L14.47 132.81 L15.13 133.40 L15.83 133.90 L16.54 134.33 L17.26 134.70 L17.99 135.00 L18.70 135.24 L19.41 135.43 L20.15 135.57 L20.96 135.65 L21.79 135.67 L22.59 135.63 L23.39 135.56 L24.17 135.46 L24.94 135.32 L25.69 135.12 L26.44 134.86 L27.19 134.48 L28.05 133.79 L28.86 132.62 L29.28 131.38 L29.41 130.35 L29.41 129.49 L29.34 128.77 L29.25 128.16 L29.15 127.68 L29.07 127.35 L29.05 127.25 L29.06 127.24 L20.94 128.76 L21.03 129.18 L21.17 129.67 L21.31 130.03 L21.44 130.32 L21.56 130.54 L21.66 130.66 L21.74 130.63 L21.85 130.36 L22.09 129.81 L22.55 129.21 L22.87 129.03 L22.90 129.14 L22.79 129.36 L22.58 129.60 L22.30 129.85 L21.97 130.08 L21.64 130.26 L21.32 130.37 L21.06 130.43 L20.85 130.43 L20.57 130.37 L20.21 130.28 L19.82 130.15 L19.43 129.98 L19.05 129.79 L18.69 129.58 L18.36 129.35 L18.09 129.11 L17.87 128.87 L17.68 128.61 L17.47 128.24 L17.24 127.75 L17.01 127.19 L16.80 126.59 L16.63 125.95 L16.50 125.31 L16.42 124.68 L16.39 124.09 L16.41 123.55 L16.49 123.06 L16.64 122.52 L16.87 121.90 L17.17 121.22 L17.54 120.52 L17.96 119.83 L18.42 119.15 L18.92 118.52 L19.44 117.94 L19.96 117.44 L20.45 117.04 L20.97 116.71 L21.58 116.40 L22.28 116.11 L23.06 115.86 L23.90 115.63 L24.78 115.43 L25.68 115.26 L26.59 115.11 L27.48 114.98 L28.34 114.86 L29.13 114.75 L29.88 114.65 L30.60 114.57 L31.29 114.51 L31.97 114.47 L32.65 114.44 L33.33 114.44 L34.03 114.47 L34.75 114.53 L35.49 114.62 L36.28 114.77 L37.20 115.00 L38.20 115.31 L39.24 115.67 L40.29 116.08 L41.29 116.49 L42.23 116.91 L43.08 117.30 L43.80 117.64 L44.36 117.89Z"/><circle cx="45.00" cy="116.50" r="1.53"/><circle cx="25.00" cy="128.00" r="4.13"/><path d="M37.70 104.55 L37.17 104.15 L36.51 103.61 L35.75 102.93 L34.92 102.13 L34.04 101.25 L33.12 100.32 L32.17 99.38 L31.21 98.50 L30.23 97.70 L29.29 97.03 L28.40 96.42 L27.54 95.73 L26.69 94.95 L25.84 94.12 L24.96 93.29 L24.03 92.51 L23.04 91.80 L21.95 91.21 L20.76 90.76 L19.40 90.52 L17.93 90.59 L16.60 90.98 L15.48 91.54 L14.54 92.17 L13.72 92.78 L12.98 93.33 L12.48 94.01 L12.32 94.92 L12.18 95.57 L11.93 95.85 L13.27 98.15 L13.76 98.00 L14.54 98.01 L15.46 98.12 L16.17 97.94 L16.76 97.60 L17.35 97.37 L17.89 97.27 L18.31 97.29 L18.52 97.39 L18.60 97.48 L18.83 97.57 L19.31 97.72 L19.98 97.93 L20.79 98.20 L21.71 98.52 L22.71 98.89 L23.74 99.33 L24.77 99.82 L25.77 100.38 L26.71 100.97 L27.65 101.54 L28.68 102.12 L29.79 102.70 L30.95 103.29 L32.09 103.88 L33.18 104.46 L34.17 105.03 L35.04 105.58 L35.76 106.06 L36.30 106.45Z"/><circle cx="37.00" cy="105.50" r="1.18"/><circle cx="12.60" cy="97.00" r="1.33"/><path d="M28.72 25.92 L28.72 26.73 L28.75 27.73 L28.84 28.91 L28.98 30.24 L29.14 31.69 L29.25 33.24 L29.27 34.87 L29.23 36.55 L29.22 38.26 L29.23 39.97 L29.25 41.70 L29.28 43.51 L29.31 45.37 L29.35 47.30 L29.39 49.29 L29.42 51.34 L29.44 53.44 L29.45 55.58 L29.45 57.78 L29.47 60.02 L29.51 62.44 L29.56 65.12 L29.63 67.96 L29.71 70.89 L29.80 73.80 L29.89 76.61 L29.98 79.23 L30.07 81.57 L30.15 83.54 L30.20 85.05 L32.80 84.95 L32.74 83.44 L32.65 81.47 L32.54 79.13 L32.42 76.51 L32.28 73.70 L32.14 70.79 L32.00 67.88 L31.89 65.04 L31.79 62.38 L31.73 59.98 L31.70 57.76 L31.69 55.58 L31.71 53.45 L31.76 51.37 L31.85 49.33 L31.95 47.35 L32.07 45.43 L32.18 43.57 L32.29 41.76 L32.37 40.03 L32.45 38.33 L32.52 36.63 L32.57 34.96 L32.68 33.35 L32.89 31.81 L33.14 30.37 L33.37 29.06 L33.54 27.89 L33.64 26.88 L33.68 26.08Z"/><circle cx="31.20" cy="26.00" r="2.48"/><circle cx="31.50" cy="85.00" r="1.30"/><path d="M31.46 40.32 L31.16 39.87 L30.80 39.26 L30.40 38.50 L29.98 37.62 L29.55 36.65 L29.10 35.62 L28.61 34.59 L28.06 33.58 L27.45 32.64 L26.77 31.81 L26.06 31.08 L25.38 30.33 L24.71 29.55 L24.06 28.75 L23.42 27.95 L22.76 27.19 L22.08 26.49 L21.38 25.87 L20.67 25.34 L19.92 24.89 L19.08 24.52 L18.19 24.24 L17.33 24.04 L16.53 23.86 L15.79 23.66 L15.13 23.45 L14.43 23.56 L13.72 23.97 L13.18 24.23 L12.82 24.22 L11.78 26.78 L12.09 27.04 L12.39 27.61 L12.67 28.38 L13.09 28.91 L13.64 29.15 L14.18 29.47 L14.70 29.86 L15.18 30.29 L15.63 30.71 L16.08 31.11 L16.64 31.50 L17.30 31.88 L18.03 32.24 L18.80 32.59 L19.61 32.92 L20.43 33.27 L21.22 33.67 L21.97 34.11 L22.65 34.63 L23.23 35.19 L23.82 35.76 L24.51 36.40 L25.26 37.09 L26.04 37.81 L26.82 38.54 L27.55 39.27 L28.20 39.97 L28.75 40.64 L29.20 41.22 L29.54 41.68Z"/><circle cx="30.50" cy="41.00" r="1.18"/><circle cx="12.30" cy="25.50" r="1.38"/><path d="M31.83 34.50 L31.46 34.17 L30.97 33.74 L30.40 33.24 L29.78 32.68 L29.13 32.07 L28.46 31.44 L27.81 30.79 L27.20 30.16 L26.65 29.55 L26.18 28.98 L25.73 28.41 L25.28 27.82 L24.84 27.24 L24.43 26.67 L24.05 26.11 L23.70 25.56 L23.39 25.03 L23.11 24.52 L22.88 24.03 L22.70 23.56 L22.55 23.09 L22.41 22.59 L22.30 22.05 L22.21 21.50 L22.14 20.93 L22.09 20.36 L22.06 19.80 L22.05 19.26 L22.06 18.75 L22.07 18.29 L22.11 17.88 L22.16 17.49 L22.24 17.11 L22.34 16.74 L22.46 16.39 L22.60 16.05 L22.74 15.75 L22.90 15.47 L23.05 15.23 L23.19 15.04 L23.33 14.88 L23.48 14.74 L23.66 14.61 L23.85 14.49 L24.04 14.39 L24.24 14.31 L24.41 14.26 L24.56 14.22 L24.67 14.19 L24.69 14.14 L24.68 14.08 L24.81 14.07 L25.09 14.12 L25.44 14.25 L25.83 14.42 L26.22 14.63 L26.59 14.86 L26.92 15.11 L27.23 15.34 L27.47 15.52 L29.33 13.08 L29.17 12.95 L28.95 12.75 L28.68 12.45 L28.36 12.10 L28.01 11.69 L27.62 11.27 L27.18 10.84 L26.67 10.44 L26.04 10.09 L25.31 9.86 L24.62 9.78 L24.00 9.79 L23.40 9.89 L22.82 10.05 L22.27 10.26 L21.73 10.52 L21.21 10.81 L20.72 11.15 L20.24 11.54 L19.81 11.96 L19.42 12.41 L19.06 12.88 L18.72 13.39 L18.40 13.92 L18.11 14.49 L17.85 15.08 L17.61 15.70 L17.41 16.35 L17.25 17.03 L17.13 17.71 L17.04 18.40 L16.98 19.10 L16.95 19.83 L16.95 20.60 L16.99 21.38 L17.07 22.18 L17.20 23.00 L17.37 23.81 L17.61 24.63 L17.90 25.44 L18.26 26.22 L18.66 26.96 L19.10 27.68 L19.58 28.36 L20.09 29.02 L20.61 29.65 L21.15 30.27 L21.70 30.86 L22.25 31.44 L22.82 32.02 L23.46 32.64 L24.16 33.28 L24.90 33.93 L25.65 34.56 L26.40 35.18 L27.11 35.76 L27.77 36.30 L28.34 36.78 L28.81 37.18 L29.17 37.50Z"/><circle cx="30.50" cy="36.00" r="2.01"/><circle cx="28.40" cy="14.30" r="1.53"/><path d="M31.31 59.20 L31.03 58.37 L30.71 57.24 L30.40 55.86 L30.10 54.30 L29.79 52.61 L29.43 50.88 L28.97 49.19 L28.39 47.59 L27.77 46.10 L27.23 44.74 L26.69 43.50 L26.14 42.30 L25.54 41.15 L24.87 40.08 L24.13 39.10 L23.32 38.24 L22.46 37.49 L21.53 36.89 L20.57 36.41 L19.45 36.00 L18.08 35.77 L16.72 35.89 L15.60 36.25 L14.68 36.71 L13.91 37.17 L13.34 37.74 L13.09 38.52 L12.96 39.23 L12.84 39.66 L12.66 39.84 L13.94 42.16 L14.34 42.02 L14.94 41.94 L15.67 42.01 L16.38 42.08 L16.85 41.95 L17.19 41.79 L17.44 41.75 L17.50 41.82 L17.34 41.92 L17.15 42.00 L17.25 42.20 L17.58 42.55 L18.01 42.97 L18.54 43.43 L19.14 43.95 L19.82 44.51 L20.55 45.11 L21.32 45.77 L22.07 46.49 L22.77 47.26 L23.44 48.21 L24.05 49.44 L24.70 50.86 L25.45 52.35 L26.24 53.86 L27.03 55.35 L27.74 56.76 L28.32 58.05 L28.77 59.16 L29.09 60.00Z"/><circle cx="30.20" cy="59.60" r="1.18"/><circle cx="13.30" cy="41.00" r="1.33"/><path d="M31.64 83.45 L31.27 82.72 L30.84 81.74 L30.37 80.54 L29.88 79.16 L29.38 77.67 L28.83 76.13 L28.22 74.60 L27.51 73.14 L26.73 71.81 L26.00 70.59 L25.33 69.41 L24.67 68.21 L23.99 67.01 L23.26 65.84 L22.47 64.76 L21.60 63.79 L20.68 62.94 L19.70 62.25 L18.68 61.69 L17.58 61.20 L16.28 60.85 L14.93 60.81 L13.75 61.04 L12.78 61.42 L12.00 61.86 L11.53 62.52 L11.33 63.26 L11.22 63.86 L11.13 64.19 L11.00 64.32 L12.20 66.68 L12.59 66.54 L13.13 66.43 L13.75 66.46 L14.38 66.58 L14.83 66.64 L15.04 66.56 L15.13 66.56 L15.07 66.62 L14.90 66.69 L14.82 66.80 L15.03 67.10 L15.45 67.60 L16.01 68.21 L16.69 68.86 L17.48 69.55 L18.37 70.27 L19.31 71.00 L20.26 71.77 L21.18 72.58 L22.00 73.41 L22.75 74.37 L23.49 75.53 L24.34 76.77 L25.25 78.05 L26.20 79.33 L27.10 80.58 L27.92 81.78 L28.60 82.87 L29.15 83.82 L29.56 84.55Z"/><circle cx="30.60" cy="84.00" r="1.18"/><circle cx="11.60" cy="65.50" r="1.33"/><path d="M51.18 30.44 L51.06 30.08 L50.93 29.62 L50.79 29.06 L50.65 28.44 L50.53 27.75 L50.41 27.03 L50.29 26.29 L50.17 25.57 L50.05 24.86 L49.91 24.21 L49.74 23.56 L49.54 22.87 L49.31 22.16 L49.07 21.44 L48.85 20.73 L48.63 20.05 L48.42 19.42 L48.24 18.85 L48.09 18.38 L47.97 18.00 L43.03 19.60 L43.15 19.96 L43.30 20.44 L43.48 21.00 L43.68 21.64 L43.90 22.32 L44.13 23.03 L44.37 23.76 L44.60 24.47 L44.84 25.16 L45.09 25.79 L45.37 26.41 L45.69 27.05 L46.03 27.71 L46.38 28.37 L46.72 29.02 L47.03 29.65 L47.30 30.23 L47.53 30.76 L47.70 31.21 L47.82 31.56Z"/><circle cx="49.50" cy="31.00" r="1.77"/><circle cx="45.50" cy="18.80" r="2.60"/><path d="M50.46 31.69 L50.76 31.28 L51.18 30.77 L51.71 30.19 L52.33 29.54 L53.03 28.87 L53.76 28.17 L54.51 27.45 L55.23 26.72 L55.89 25.99 L56.45 25.27 L56.94 24.57 L57.41 23.87 L57.92 23.19 L58.48 22.54 L59.06 21.90 L59.65 21.25 L60.23 20.60 L60.78 19.91 L61.28 19.20 L61.72 18.43 L62.09 17.58 L62.36 16.67 L62.52 15.73 L62.61 14.80 L62.70 13.91 L62.83 13.09 L62.96 12.34 L62.54 11.54 L62.11 10.85 L62.07 10.39 L59.53 9.61 L59.23 9.98 L58.49 10.37 L57.71 10.83 L57.42 11.50 L57.10 12.22 L56.70 12.93 L56.26 13.62 L55.85 14.30 L55.52 14.95 L55.28 15.57 L55.07 16.20 L54.87 16.89 L54.68 17.60 L54.49 18.35 L54.27 19.10 L54.03 19.86 L53.73 20.61 L53.38 21.33 L52.96 22.03 L52.55 22.73 L52.15 23.48 L51.74 24.30 L51.32 25.19 L50.90 26.10 L50.47 27.01 L50.05 27.86 L49.62 28.64 L49.21 29.32 L48.84 29.88 L48.54 30.31Z"/><circle cx="49.50" cy="31.00" r="1.18"/><circle cx="60.80" cy="10.00" r="1.33"/><path d="M49.75 32.21 L50.13 32.14 L50.61 32.03 L51.14 31.91 L51.73 31.79 L52.35 31.68 L53.00 31.59 L53.65 31.54 L54.28 31.51 L54.86 31.53 L55.40 31.59 L55.97 31.68 L56.59 31.79 L57.24 31.92 L57.90 32.10 L58.55 32.36 L59.17 32.70 L59.76 33.09 L60.31 33.52 L60.81 33.95 L61.24 34.36 L61.62 34.77 L62.05 35.21 L62.56 35.67 L63.10 36.15 L63.61 36.70 L64.08 37.28 L64.52 37.84 L64.94 38.35 L65.36 38.80 L65.72 39.12 L70.28 33.88 L70.00 33.65 L69.61 33.34 L69.09 32.96 L68.46 32.53 L67.76 32.05 L67.04 31.52 L66.31 30.95 L65.52 30.42 L64.65 29.97 L63.76 29.64 L62.90 29.42 L62.05 29.27 L61.19 29.15 L60.35 29.06 L59.51 28.95 L58.70 28.83 L57.91 28.68 L57.13 28.55 L56.37 28.46 L55.60 28.41 L54.81 28.44 L54.00 28.54 L53.23 28.69 L52.48 28.87 L51.77 29.07 L51.11 29.27 L50.51 29.45 L49.99 29.61 L49.57 29.72 L49.25 29.79Z"/><circle cx="49.50" cy="31.00" r="1.24"/><circle cx="68.00" cy="36.50" r="3.47"/><path d="M34.90 64.76 L35.33 64.27 L35.89 63.64 L36.57 62.91 L37.36 62.13 L38.23 61.31 L39.15 60.50 L40.06 59.69 L40.94 58.93 L41.75 58.22 L42.46 57.60 L43.14 57.02 L43.87 56.49 L44.62 56.04 L45.39 55.65 L46.17 55.31 L46.94 55.02 L47.69 54.75 L48.42 54.49 L49.12 54.24 L49.75 54.00 L50.36 53.76 L51.03 53.46 L51.78 53.12 L52.58 52.77 L53.41 52.47 L54.24 52.26 L55.02 52.04 L55.67 51.35 L56.24 50.74 L56.72 50.50 L56.28 48.10 L55.80 48.03 L55.13 47.60 L54.32 47.12 L53.47 47.14 L52.53 47.20 L51.52 47.23 L50.45 47.27 L49.36 47.38 L48.27 47.62 L47.25 48.00 L46.34 48.46 L45.50 48.99 L44.70 49.58 L43.94 50.22 L43.21 50.90 L42.49 51.60 L41.77 52.31 L41.05 53.02 L40.31 53.71 L39.54 54.40 L38.75 55.21 L37.97 56.15 L37.22 57.17 L36.51 58.24 L35.83 59.31 L35.18 60.34 L34.57 61.28 L34.00 62.09 L33.50 62.75 L33.10 63.24Z"/><circle cx="34.00" cy="64.00" r="1.18"/><circle cx="56.50" cy="49.30" r="1.22"/><path transform="translate(78.1 73.9) rotate(0)" d="M -3.2 -5.8 C -7 -8.5 -12.5 -12 -12 -17 C -11.5 -21.5 -7.5 -22 -5.5 -20 C -6.5 -26 -3.5 -29 0 -29 C 3.5 -29 6.5 -26 5.5 -20 C 7.5 -22 11.5 -21.5 12 -17 C 12.5 -12 7 -8.5 3.2 -5.8 Z"/><path transform="translate(78.1 73.9) rotate(90)" d="M -3.2 -5.8 C -7 -8.5 -12.5 -12 -12 -17 C -11.5 -21.5 -7.5 -22 -5.5 -20 C -6.5 -26 -3.5 -29 0 -29 C 3.5 -29 6.5 -26 5.5 -20 C 7.5 -22 11.5 -21.5 12 -17 C 12.5 -12 7 -8.5 3.2 -5.8 Z"/><path transform="translate(78.1 73.9) rotate(180)" d="M -3.2 -5.8 C -7 -8.5 -12.5 -12 -12 -17 C -11.5 -21.5 -7.5 -22 -5.5 -20 C -6.5 -26 -3.5 -29 0 -29 C 3.5 -29 6.5 -26 5.5 -20 C 7.5 -22 11.5 -21.5 12 -17 C 12.5 -12 7 -8.5 3.2 -5.8 Z"/><path transform="translate(78.1 73.9) rotate(270)" d="M -3.2 -5.8 C -7 -8.5 -12.5 -12 -12 -17 C -11.5 -21.5 -7.5 -22 -5.5 -20 C -6.5 -26 -3.5 -29 0 -29 C 3.5 -29 6.5 -26 5.5 -20 C 7.5 -22 11.5 -21.5 12 -17 C 12.5 -12 7 -8.5 3.2 -5.8 Z"/><circle cx="78.1" cy="73.9" r="4.6"/></g><g stroke="#F7F2E7" stroke-width="1.1" fill="none"><circle cx="78.1" cy="73.9" r="5.3"/><path d="M78.1 68.4V59.900000000000006 M78.1 79.4V87.9 M72.6 73.9H64.1 M83.6 73.9H92.1"/></g></g></defs>
<use href="#tile" x="3" y="33"/>
<use href="#tile" x="172" y="33"/>
<use href="#tile" x="342" y="33"/>
<use href="#tile" x="3" y="183"/>
<use href="#tile" x="172" y="183"/>
<use href="#tile" x="342" y="183"/>
<use href="#tile" x="3" y="333"/>
<use href="#tile" x="172" y="333"/>
<use href="#tile" x="342" y="333"/>
<use href="#tile" x="3" y="483"/>
<use href="#tile" x="172" y="483"/>
<use href="#tile" x="342" y="483"/>
<use href="#tile" x="3" y="633"/>
<use href="#tile" x="172" y="633"/>
<use href="#tile" x="342" y="633"/>
<g font-size="13.9" fill="#000">
<text x="7.7" y="51">text</text>
<text x="7.7" y="67">text</text>
<text x="7.7" y="83">text</text>
<text x="7.7" y="99">text</text>
<text x="7.7" y="115">text</text>
<text x="7.7" y="131">text</text>
<text x="7.7" y="147">text</text>
<text x="7.7" y="163">text</text>
<text x="7.7" y="179">text</text>
<text x="7.7" y="195">text</text>
<text x="7.7" y="211">text</text>
<text x="7.7" y="227">text</text>
<text x="7.7" y="243">text</text>
<text x="7.7" y="259">text</text>
<text x="7.7" y="275">text</text>
<text x="7.7" y="291">text</text>
<text x="7.7" y="307">text</text>
<text x="7.7" y="323">text</text>
<text x="7.7" y="339">text</text>
<text x="7.7" y="355">text</text>
<text x="7.7" y="371">text</text>
<text x="7.7" y="387">text</text>
<text x="7.7" y="403">text</text>
<text x="7.7" y="419">text</text>
<text x="7.7" y="435">text</text>
<text x="7.7" y="451">text</text>
<text x="7.7" y="467">text</text>
<text x="7.7" y="483">text</text>
<text x="7.7" y="499">text</text>
<text x="7.7" y="515">text</text>
<text x="7.7" y="531">text</text>
<text x="7.7" y="547">text</text>
<text x="7.7" y="563">text</text>
<text x="7.7" y="579">text</text>
<text x="7.7" y="595">text</text>
<text x="7.7" y="611">text</text>
<text x="7.7" y="627">text</text>
<text x="7.7" y="643">text</text>
<text x="7.7" y="659">text</text>
<text x="7.7" y="675">text</text>
<text x="7.7" y="691">text</text>
<text x="7.7" y="707">text</text>
</g>
</svg>
<!-- scrollbar -->
<rect x="493" y="33" width="16" height="676" fill="#F0F0F0"/>
<rect x="493" y="50" width="15" height="264" fill="#CDCDCD"/>
<polyline points="497.3,44.6 500.5,41.4 503.7,44.6" fill="none" stroke="#606060" stroke-width="1.8"/>
<polyline points="497.3,699 500.5,702.2 503.7,699" fill="none" stroke="#606060" stroke-width="1.8"/>
<!-- panel -->
<rect x="511" y="31" width="307" height="680" fill="#F0F0F0"/>
<g font-size="12.4" fill="#000">
<rect x="517.5" y="46.5" width="290" height="192" fill="none" stroke="#DCDCDC"/>
<rect x="524.5" y="45" width="47" height="3" fill="#F0F0F0"/>
<text x="524.5" y="51">Position</text>
<text x="532.8" y="78">Horizontal</text>
<rect x="533.5" y="87.5" width="144" height="22" fill="#E1E1E1" stroke="#ADADAD"/>
<text x="537" y="103">left</text>
<polyline points="665,96.8 669,100.8 673,96.8" fill="none" stroke="#404040" stroke-width="1.1"/>
<path d="M684.2 98.5H691.2M687.7 96V101.2" stroke="#000" stroke-width="1.05" fill="none"/>
<rect x="533.5" y="116.5" width="120" height="22" fill="#fff" stroke="#7A7A7A"/>
<text x="536" y="131">0</text>
<rect x="660.5" y="116.5" width="97" height="22" fill="#E1E1E1" stroke="#ADADAD"/>
<text x="664" y="132">pixels</text>
<polyline points="745,125.8 749,129.8 753,125.8" fill="none" stroke="#404040" stroke-width="1.1"/>
<text x="532.8" y="158">Vertical</text>
<rect x="533.5" y="167.5" width="144" height="22" fill="#E1E1E1" stroke="#ADADAD"/>
<text x="537" y="183">top</text>
<polyline points="665,176.8 669,180.8 673,176.8" fill="none" stroke="#404040" stroke-width="1.1"/>
<path d="M684.2 178.5H691.2M687.7 176V181.2" stroke="#000" stroke-width="1.05" fill="none"/>
<rect x="533.5" y="196.5" width="120" height="22" fill="#fff" stroke="#7A7A7A"/>
<text x="536" y="211">0</text>
<rect x="660.5" y="196.5" width="97" height="22" fill="#E1E1E1" stroke="#ADADAD"/>
<text x="664" y="212">pixels</text>
<polyline points="745,205.8 749,209.8 753,205.8" fill="none" stroke="#404040" stroke-width="1.1"/>
<text x="526.8" y="262">Attachment</text>
<rect x="527.5" y="271.5" width="144" height="22" fill="#E1E1E1" stroke="#ADADAD"/>
<text x="531" y="287">window</text>
<polyline points="659,280.8 663,284.8 667,280.8" fill="none" stroke="#404040" stroke-width="1.1"/>
<rect x="517.5" y="310.5" width="290" height="192" fill="none" stroke="#DCDCDC"/>
<rect x="524.5" y="309" width="28" height="3" fill="#F0F0F0"/>
<text x="524.5" y="315">Size</text>
<text x="532.8" y="342">Width</text>
<rect x="533.5" y="351.5" width="144" height="22" fill="#E1E1E1" stroke="#ADADAD"/>
<text x="537" y="367">auto</text>
<polyline points="665,360.8 669,364.8 673,360.8" fill="none" stroke="#404040" stroke-width="1.1"/>
<rect x="533.5" y="380.5" width="120" height="22" fill="#fff" stroke="#CCCCCC"/>
<text x="536" y="395" fill="#6D6D6D">100</text>
<rect x="660.5" y="380.5" width="97" height="22" fill="#CCCCCC" stroke="#BFBFBF"/>
<text x="664" y="396" fill="#838383">%</text>
<polyline points="745,389.8 749,393.8 753,389.8" fill="none" stroke="#A2A2A2" stroke-width="1.1"/>
<text x="532.8" y="422">Height</text>
<rect x="533.5" y="431.5" width="144" height="22" fill="#E1E1E1" stroke="#ADADAD"/>
<text x="537" y="447">auto</text>
<polyline points="665,440.8 669,444.8 673,440.8" fill="none" stroke="#404040" stroke-width="1.1"/>
<rect x="533.5" y="460.5" width="120" height="22" fill="#fff" stroke="#CCCCCC"/>
<text x="536" y="475" fill="#6D6D6D">100</text>
<rect x="660.5" y="460.5" width="97" height="22" fill="#CCCCCC" stroke="#BFBFBF"/>
<text x="664" y="476" fill="#838383">%</text>
<polyline points="745,469.8 749,473.8 753,469.8" fill="none" stroke="#A2A2A2" stroke-width="1.1"/>
<rect x="517.5" y="517.5" width="290" height="137" fill="none" stroke="#DCDCDC"/>
<rect x="524.5" y="516" width="44" height="3" fill="#F0F0F0"/>
<text x="524.5" y="522">Repeat</text>
<text x="532.8" y="549">Horizontal</text>
<rect x="533.5" y="558.5" width="144" height="22" fill="#E1E1E1" stroke="#ADADAD"/>
<text x="537" y="574">space</text>
<polyline points="665,567.8 669,571.8 673,567.8" fill="none" stroke="#404040" stroke-width="1.1"/>
<rect x="536" y="561" width="1" height="1" fill="#000"/><rect x="536" y="577" width="1" height="1" fill="#000"/>
<rect x="538" y="561" width="1" height="1" fill="#000"/><rect x="538" y="577" width="1" height="1" fill="#000"/>
<rect x="540" y="561" width="1" height="1" fill="#000"/><rect x="540" y="577" width="1" height="1" fill="#000"/>
<rect x="542" y="561" width="1" height="1" fill="#000"/><rect x="542" y="577" width="1" height="1" fill="#000"/>
<rect x="544" y="561" width="1" height="1" fill="#000"/><rect x="544" y="577" width="1" height="1" fill="#000"/>
<rect x="546" y="561" width="1" height="1" fill="#000"/><rect x="546" y="577" width="1" height="1" fill="#000"/>
<rect x="548" y="561" width="1" height="1" fill="#000"/><rect x="548" y="577" width="1" height="1" fill="#000"/>
<rect x="550" y="561" width="1" height="1" fill="#000"/><rect x="550" y="577" width="1" height="1" fill="#000"/>
<rect x="552" y="561" width="1" height="1" fill="#000"/><rect x="552" y="577" width="1" height="1" fill="#000"/>
<rect x="554" y="561" width="1" height="1" fill="#000"/><rect x="554" y="577" width="1" height="1" fill="#000"/>
<rect x="556" y="561" width="1" height="1" fill="#000"/><rect x="556" y="577" width="1" height="1" fill="#000"/>
<rect x="558" y="561" width="1" height="1" fill="#000"/><rect x="558" y="577" width="1" height="1" fill="#000"/>
<rect x="560" y="561" width="1" height="1" fill="#000"/><rect x="560" y="577" width="1" height="1" fill="#000"/>
<rect x="562" y="561" width="1" height="1" fill="#000"/><rect x="562" y="577" width="1" height="1" fill="#000"/>
<rect x="564" y="561" width="1" height="1" fill="#000"/><rect x="564" y="577" width="1" height="1" fill="#000"/>
<rect x="566" y="561" width="1" height="1" fill="#000"/><rect x="566" y="577" width="1" height="1" fill="#000"/>
<rect x="568" y="561" width="1" height="1" fill="#000"/><rect x="568" y="577" width="1" height="1" fill="#000"/>
<rect x="570" y="561" width="1" height="1" fill="#000"/><rect x="570" y="577" width="1" height="1" fill="#000"/>
<rect x="572" y="561" width="1" height="1" fill="#000"/><rect x="572" y="577" width="1" height="1" fill="#000"/>
<rect x="574" y="561" width="1" height="1" fill="#000"/><rect x="574" y="577" width="1" height="1" fill="#000"/>
<rect x="576" y="561" width="1" height="1" fill="#000"/><rect x="576" y="577" width="1" height="1" fill="#000"/>
<rect x="578" y="561" width="1" height="1" fill="#000"/><rect x="578" y="577" width="1" height="1" fill="#000"/>
<rect x="580" y="561" width="1" height="1" fill="#000"/><rect x="580" y="577" width="1" height="1" fill="#000"/>
<rect x="582" y="561" width="1" height="1" fill="#000"/><rect x="582" y="577" width="1" height="1" fill="#000"/>
<rect x="584" y="561" width="1" height="1" fill="#000"/><rect x="584" y="577" width="1" height="1" fill="#000"/>
<rect x="586" y="561" width="1" height="1" fill="#000"/><rect x="586" y="577" width="1" height="1" fill="#000"/>
<rect x="588" y="561" width="1" height="1" fill="#000"/><rect x="588" y="577" width="1" height="1" fill="#000"/>
<rect x="590" y="561" width="1" height="1" fill="#000"/><rect x="590" y="577" width="1" height="1" fill="#000"/>
<rect x="592" y="561" width="1" height="1" fill="#000"/><rect x="592" y="577" width="1" height="1" fill="#000"/>
<rect x="594" y="561" width="1" height="1" fill="#000"/><rect x="594" y="577" width="1" height="1" fill="#000"/>
<rect x="596" y="561" width="1" height="1" fill="#000"/><rect x="596" y="577" width="1" height="1" fill="#000"/>
<rect x="598" y="561" width="1" height="1" fill="#000"/><rect x="598" y="577" width="1" height="1" fill="#000"/>
<rect x="600" y="561" width="1" height="1" fill="#000"/><rect x="600" y="577" width="1" height="1" fill="#000"/>
<rect x="602" y="561" width="1" height="1" fill="#000"/><rect x="602" y="577" width="1" height="1" fill="#000"/>
<rect x="604" y="561" width="1" height="1" fill="#000"/><rect x="604" y="577" width="1" height="1" fill="#000"/>
<rect x="606" y="561" width="1" height="1" fill="#000"/><rect x="606" y="577" width="1" height="1" fill="#000"/>
<rect x="608" y="561" width="1" height="1" fill="#000"/><rect x="608" y="577" width="1" height="1" fill="#000"/>
<rect x="610" y="561" width="1" height="1" fill="#000"/><rect x="610" y="577" width="1" height="1" fill="#000"/>
<rect x="612" y="561" width="1" height="1" fill="#000"/><rect x="612" y="577" width="1" height="1" fill="#000"/>
<rect x="614" y="561" width="1" height="1" fill="#000"/><rect x="614" y="577" width="1" height="1" fill="#000"/>
<rect x="616" y="561" width="1" height="1" fill="#000"/><rect x="616" y="577" width="1" height="1" fill="#000"/>
<rect x="618" y="561" width="1" height="1" fill="#000"/><rect x="618" y="577" width="1" height="1" fill="#000"/>
<rect x="620" y="561" width="1" height="1" fill="#000"/><rect x="620" y="577" width="1" height="1" fill="#000"/>
<rect x="622" y="561" width="1" height="1" fill="#000"/><rect x="622" y="577" width="1" height="1" fill="#000"/>
<rect x="624" y="561" width="1" height="1" fill="#000"/><rect x="624" y="577" width="1" height="1" fill="#000"/>
<rect x="626" y="561" width="1" height="1" fill="#000"/><rect x="626" y="577" width="1" height="1" fill="#000"/>
<rect x="628" y="561" width="1" height="1" fill="#000"/><rect x="628" y="577" width="1" height="1" fill="#000"/>
<rect x="630" y="561" width="1" height="1" fill="#000"/><rect x="630" y="577" width="1" height="1" fill="#000"/>
<rect x="632" y="561" width="1" height="1" fill="#000"/><rect x="632" y="577" width="1" height="1" fill="#000"/>
<rect x="634" y="561" width="1" height="1" fill="#000"/><rect x="634" y="577" width="1" height="1" fill="#000"/>
<rect x="636" y="561" width="1" height="1" fill="#000"/><rect x="636" y="577" width="1" height="1" fill="#000"/>
<rect x="638" y="561" width="1" height="1" fill="#000"/><rect x="638" y="577" width="1" height="1" fill="#000"/>
<rect x="640" y="561" width="1" height="1" fill="#000"/><rect x="640" y="577" width="1" height="1" fill="#000"/>
<rect x="642" y="561" width="1" height="1" fill="#000"/><rect x="642" y="577" width="1" height="1" fill="#000"/>
<rect x="644" y="561" width="1" height="1" fill="#000"/><rect x="644" y="577" width="1" height="1" fill="#000"/>
<rect x="646" y="561" width="1" height="1" fill="#000"/><rect x="646" y="577" width="1" height="1" fill="#000"/>
<rect x="648" y="561" width="1" height="1" fill="#000"/><rect x="648" y="577" width="1" height="1" fill="#000"/>
<rect x="650" y="561" width="1" height="1" fill="#000"/><rect x="650" y="577" width="1" height="1" fill="#000"/>
<rect x="652" y="561" width="1" height="1" fill="#000"/><rect x="652" y="577" width="1" height="1" fill="#000"/>
<rect x="654" y="561" width="1" height="1" fill="#000"/><rect x="654" y="577" width="1" height="1" fill="#000"/>
<rect x="656" y="561" width="1" height="1" fill="#000"/><rect x="656" y="577" width="1" height="1" fill="#000"/>
<rect x="536" y="563" width="1" height="1" fill="#000"/><rect x="657" y="563" width="1" height="1" fill="#000"/>
<rect x="536" y="565" width="1" height="1" fill="#000"/><rect x="657" y="565" width="1" height="1" fill="#000"/>
<rect x="536" y="567" width="1" height="1" fill="#000"/><rect x="657" y="567" width="1" height="1" fill="#000"/>
<rect x="536" y="569" width="1" height="1" fill="#000"/><rect x="657" y="569" width="1" height="1" fill="#000"/>
<rect x="536" y="571" width="1" height="1" fill="#000"/><rect x="657" y="571" width="1" height="1" fill="#000"/>
<rect x="536" y="573" width="1" height="1" fill="#000"/><rect x="657" y="573" width="1" height="1" fill="#000"/>
<rect x="536" y="575" width="1" height="1" fill="#000"/><rect x="657" y="575" width="1" height="1" fill="#000"/>
<text x="532.8" y="603">Vertical</text>
<rect x="533.5" y="612.5" width="144" height="22" fill="#E1E1E1" stroke="#ADADAD"/>
<text x="537" y="628">repeat</text>
<polyline points="665,621.8 669,625.8 673,621.8" fill="none" stroke="#404040" stroke-width="1.1"/>
</g>
</svg>
</body></html>
